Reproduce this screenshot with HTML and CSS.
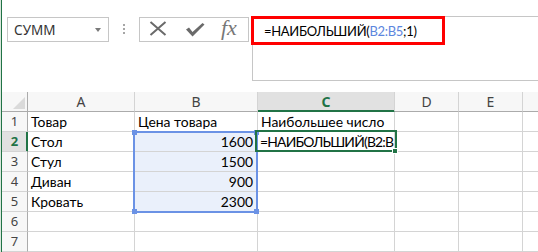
FILE: index.html
```html
<!DOCTYPE html>
<html lang="ru">

<head>
    <meta charset="UTF-8">
    <meta name="viewport" content="width=device-width, initial-scale=1.0">
    <title>НАИБОЛЬШИЙ</title>
    <link rel="stylesheet" href="styles.css">
</head>

<body>
    <div class="window">
        <div class="formula-row">
            <div class="name-box">
                <span>СУММ</span>
                <span class="arrow"></span>
            </div>

            <div class="grip"><i></i><i></i><i></i></div>

            <div class="buttons">
                <svg class="btn-cancel" width="18" height="15" viewBox="0 0 18 15">
                    <path d="M1.5 1 L16.5 14 M16.5 1 L1.5 14" stroke="#6a6a6a" stroke-width="2" fill="none" />
                </svg>
                <svg class="btn-enter" width="20" height="15" viewBox="0 0 20 15">
                    <path d="M1 7.5 L4 5.5 L7.5 10 L17.5 1 L19.5 2.5 L7.5 14.5 Z" fill="#6a6a6a" />
                </svg>
                <span class="btn-fx">fx</span>
            </div>

            <div class="formula-box">
                <div class="formula-text">=НАИБОЛЬШИЙ(<span class="ref">B2:B5</span>;1)</div>
                <div class="highlight"></div>
            </div>
        </div>

        <div class="sheet">
            <div class="corner"></div>
            <div class="hd">A</div>
            <div class="hd">B</div>
            <div class="hd active">C</div>
            <div class="hd">D</div>
            <div class="hd">E</div>
            <div class="hd last"></div>

            <div class="rh">1</div>
            <div class="cell">Товар</div>
            <div class="cell">Цена товара</div>
            <div class="cell">Наибольшее число</div>
            <div class="cell"></div>
            <div class="cell"></div>
            <div class="cell"></div>

            <div class="rh active">2</div>
            <div class="cell">Стол</div>
            <div class="cell num sel">1600</div>
            <div class="cell editing">=НАИБОЛЬШИЙ(B2:B5;1)</div>
            <div class="cell"></div>
            <div class="cell"></div>
            <div class="cell"></div>

            <div class="rh">3</div>
            <div class="cell">Стул</div>
            <div class="cell num sel">1500</div>
            <div class="cell"></div>
            <div class="cell"></div>
            <div class="cell"></div>
            <div class="cell"></div>

            <div class="rh">4</div>
            <div class="cell">Диван</div>
            <div class="cell num sel">900</div>
            <div class="cell"></div>
            <div class="cell"></div>
            <div class="cell"></div>
            <div class="cell"></div>

            <div class="rh">5</div>
            <div class="cell">Кровать</div>
            <div class="cell num sel">2300</div>
            <div class="cell"></div>
            <div class="cell"></div>
            <div class="cell"></div>
            <div class="cell"></div>

            <div class="rh">6</div>
            <div class="cell"></div>
            <div class="cell"></div>
            <div class="cell"></div>
            <div class="cell"></div>
            <div class="cell"></div>
            <div class="cell"></div>

            <div class="rh">7</div>
            <div class="cell"></div>
            <div class="cell"></div>
            <div class="cell"></div>
            <div class="cell"></div>
            <div class="cell"></div>
            <div class="cell"></div>

            <div class="range">
                <i class="handle tl"></i>
                <i class="handle tr"></i>
                <i class="handle bl"></i>
                <i class="handle br"></i>
            </div>
            <div class="active-cell">
                <i class="fill-handle"></i>
            </div>
        </div>
    </div>
</body>

</html>
```

FILE: styles.css
```css
* {
    box-sizing: border-box;
    margin: 0;
}

body {
    background-color: #fff;
    overflow: hidden;
}

.window {
    height: 252px;
    padding-left: 2px;
    background: linear-gradient(to right, #d9e6dc 0, #d9e6dc 1px, #217346 1px, #217346 2px, #fff 2px);
    font-family: Lato, 'Liberation Sans', sans-serif;
}

/* formula bar */

.formula-row {
    display: flex;
    align-items: flex-start;
    padding-top: 16px;
}

.name-box {
    display: flex;
    align-items: center;
    justify-content: space-between;
    width: 102px;
    height: 25px;
    margin-top: 1px;
    margin-left: 5px;
    padding: 0 7px 0 6px;
    border: 1px solid #c6c6c6;
    font-family: 'Noto Sans', sans-serif;
    font-size: 13.5px;
    line-height: 22px;
    color: #333;
}

.name-box .arrow {
    width: 0;
    height: 0;
    border-left: 3.5px solid transparent;
    border-right: 3.5px solid transparent;
    border-top: 4px solid #7a7a7a;
}

.grip {
    display: flex;
    flex-direction: column;
    align-items: center;
    gap: 2px;
    width: 30px;
    padding-top: 8px;
}

.grip i {
    width: 2px;
    height: 2px;
    background-color: #a6a6a6;
}

.buttons {
    display: flex;
    align-items: center;
    width: 110px;
    height: 25px;
    margin-top: 1px;
    padding-left: 9px;
    border: 1px solid #c6c6c6;
}

.btn-cancel {
    margin-top: -3px;
}

.btn-enter {
    margin-left: 18px;
    margin-top: -1px;
}

.btn-fx {
    margin-left: 16px;
    margin-top: -4px;
    font-family: 'Liberation Serif', serif;
    font-style: italic;
    font-size: 22px;
    line-height: 20px;
    color: #777;
}

.formula-box {
    position: relative;
    flex: 1;
    height: 65px;
    margin-left: 3px;
    padding: 5px 0 0 11px;
    border: 1px solid #c6c6c6;
    border-right: 0;
}

.formula-text {
    font-size: 13px;
    line-height: 19px;
    letter-spacing: -0.3px;
    color: #000;
    white-space: nowrap;
}

.formula-text .ref {
    color: #5c86de;
}

.highlight {
    position: absolute;
    left: -2px;
    top: -1px;
    width: 194px;
    height: 29px;
    border: 3px solid #f00;
}

/* sheet */

.sheet {
    position: relative;
    display: grid;
    grid-template-columns: 26px 107px 123px 137px 64px 64px 1fr;
    grid-auto-rows: 20px;
    margin-top: 11px;
}

.corner,
.hd,
.rh,
.cell {
    border-right: 1px solid #d4d4d4;
    border-bottom: 1px solid #d4d4d4;
}

.corner {
    position: relative;
    background-color: #f7f7f7;
    border-bottom-color: #ababab;
    border-right-color: #ababab;
}

.corner::after {
    content: '';
    position: absolute;
    right: 2px;
    bottom: 2px;
    width: 0;
    height: 0;
    border-left: 12px solid transparent;
    border-bottom: 12px solid #dadada;
}

.hd {
    background-color: #f7f7f7;
    border-bottom-color: #ababab;
    font-family: 'Noto Sans', sans-serif;
    font-size: 14px;
    line-height: 19px;
    text-align: center;
    color: #444;
}

.hd.last {
    border-right: 0;
}

.hd.active {
    background-color: #e1e1e1;
    border-bottom-color: #217346;
    box-shadow: inset 0 -1px 0 #217346;
    color: #217346;
    font-weight: bold;
}

.rh {
    background-color: #f7f7f7;
    border-right-color: #ababab;
    font-family: 'Noto Sans', sans-serif;
    font-size: 13px;
    line-height: 19px;
    text-align: center;
    color: #444;
}

.rh.active {
    background-color: #e1e1e1;
    border-right-color: #217346;
    box-shadow: inset -1px 0 0 #217346;
    color: #217346;
    font-weight: bold;
}

.cell {
    padding: 0 3px;
    font-size: 13.9px;
    line-height: 19px;
    color: #000;
    white-space: nowrap;
    overflow: hidden;
}

.cell:nth-child(7n) {
    border-right: 0;
}

.cell.num {
    text-align: right;
    padding-right: 4px;
}

.cell.sel {
    background-color: #eaf0fb;
}

.cell.editing {
    padding-left: 2px;
    letter-spacing: -0.8px;
    text-overflow: clip;
}

.range {
    position: absolute;
    left: 131px;
    top: 39px;
    width: 125px;
    height: 82px;
    border: 2px solid #6b92e5;
}

.handle {
    position: absolute;
    width: 5px;
    height: 5px;
    background-color: #6b92e5;
}

.handle.tl {
    left: -3px;
    top: -3px;
}

.handle.tr {
    right: -3px;
    top: -3px;
}

.handle.bl {
    left: -3px;
    bottom: -3px;
}

.handle.br {
    right: -3px;
    bottom: -3px;
}

.active-cell {
    position: absolute;
    left: 253px;
    top: 38px;
    width: 142px;
    height: 22px;
    border: 2px solid #217346;
}

.fill-handle {
    position: absolute;
    right: -3px;
    bottom: -4px;
    width: 6px;
    height: 6px;
    background-color: #217346;
    border: 1px solid #fff;
}
```
